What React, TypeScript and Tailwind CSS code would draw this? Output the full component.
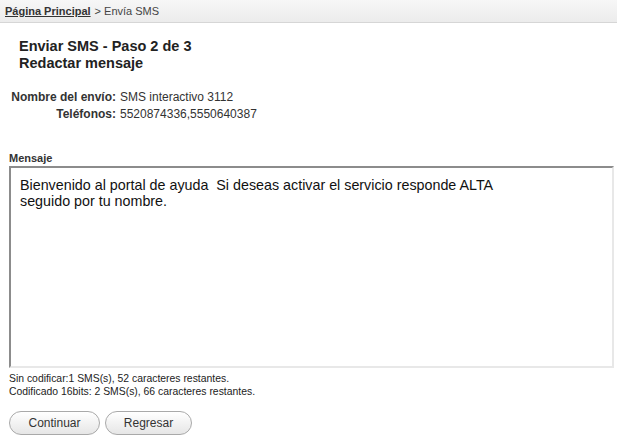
import React from 'react';

const mensaje =
  'Bienvenido al portal de ayuda  Si deseas activar el servicio responde ALTA\nseguido por tu nombre.';

export default function App() {
  return (
    <div className="w-[617px] h-[441px] bg-white text-[#333] font-['Liberation_Sans',Arial,sans-serif]">
      {/* Breadcrumb */}
      <div className="h-[23px] flex items-center px-[5px] text-[11px] bg-gradient-to-b from-[#f7f7f7] to-[#ececec] border-b border-[#d6d6d6]">
        <a className="font-bold underline text-[#333]">Página Principal</a>
        <span className="ml-1 text-[#444]">&gt; Envía SMS</span>
      </div>

      {/* Title */}
      <div className="pl-[19px] pt-[15px] text-[14.5px] font-bold leading-[17px] text-[#222]">
        <div>Enviar SMS - Paso 2 de 3</div>
        <div>Redactar mensaje</div>
      </div>

      {/* Details */}
      <div className="mt-[18px] grid grid-cols-[116px_1fr] gap-x-[4px] gap-y-[3px] text-[12px] leading-[14px]">
        <span className="text-right font-bold">Nombre del envío:</span>
        <span>SMS interactivo 3112</span>
        <span className="text-right font-bold">Teléfonos:</span>
        <span>5520874336,5550640387</span>
      </div>

      {/* Message */}
      <div className="px-[9px] mt-[30px]">
        <div className="text-[11px] font-bold leading-[14px]">Mensaje</div>
        <textarea
          readOnly
          value={mensaje}
          className="mt-[1px] block w-[605px] h-[202px] resize-none px-[9px] py-[9px] text-[14.3px] leading-[16px] text-[#111] bg-white border-2 border-t-[#8c8c8c] border-l-[#8c8c8c] border-r-[#e8e8e8] border-b-[#e8e8e8] outline-none font-['Liberation_Sans',Arial,sans-serif]"
        />
        <div className="mt-[4px] text-[10.4px] leading-[13px] text-[#222]">
          <div>Sin codificar:1 SMS(s), 52 caracteres restantes.</div>
          <div>Codificado 16bits: 2 SMS(s), 66 caracteres restantes.</div>
        </div>
        <div className="mt-[13px] flex gap-[5px]">
          <button className="w-[91px] h-[24px] rounded-full border border-[#a9a9a9] bg-gradient-to-b from-white to-[#e6e6e6] text-[12px] text-[#333]">
            Continuar
          </button>
          <button className="w-[87px] h-[24px] rounded-full border border-[#a9a9a9] bg-gradient-to-b from-white to-[#e6e6e6] text-[12px] text-[#333]">
            Regresar
          </button>
        </div>
      </div>
    </div>
  );
}
